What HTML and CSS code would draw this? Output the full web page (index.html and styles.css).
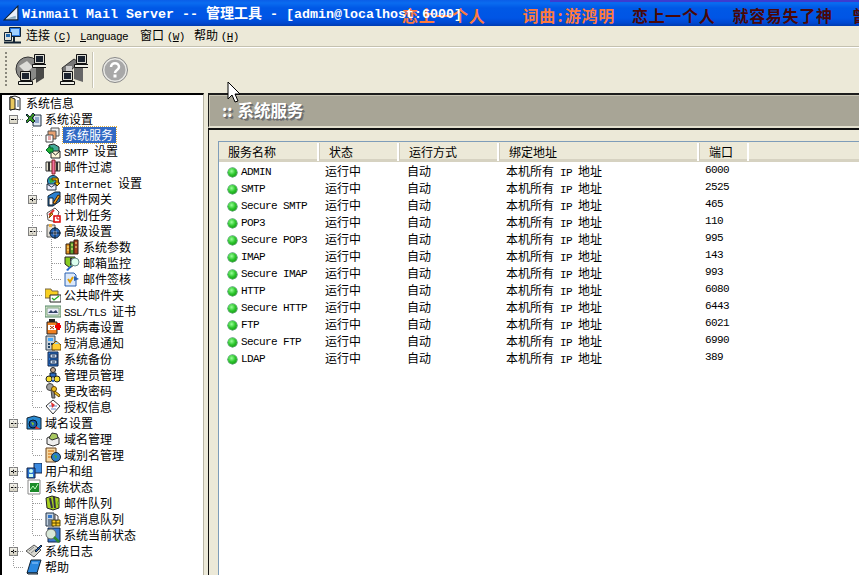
FILE: index.html
```html
<!DOCTYPE html>
<html lang="zh">
<head>
<meta charset="utf-8">
<title>Winmail Mail Server</title>
<link rel="stylesheet" href="styles.css">
</head>
<body>
<svg class="defs" width="0" height="0">
<defs>
<symbol id="i-info" viewBox="0 0 16 16"><path d="M3 2l5-1 5 2v12l-5-1-5 1z" fill="#fff" stroke="#222"/><path d="M3 2l5 2v10l-5 1z" fill="#e8c860" stroke="#222"/><path d="M10 5h2v7h-2z" fill="#9ab"/></symbol>
<symbol id="i-set" viewBox="0 0 16 16"><path d="M7 4h8v11H7z" fill="#dfe8f0" stroke="#234"/><path d="M9 7h4M9 9h4M9 11h4" stroke="#46a"/><path d="M1 3l3 3 3-4 2 2-3 3 3 3-2 2-3-3-3 3-1-2 3-3-3-3z" fill="#3a9a20" stroke="#123"/></symbol>
<symbol id="i-svc" viewBox="0 0 16 16"><path d="M6 1h8v8H6z" fill="#eee" stroke="#555"/><path d="M3 4h8v8H3z" fill="#e8a070" stroke="#555"/><path d="M1 8h7v7H1z" fill="#fff" stroke="#444"/><path d="M3 10h3M3 12h3" stroke="#c55"/></symbol>
<symbol id="i-smtp" viewBox="0 0 16 16"><path d="M4 2l5-1 5 3v5H4z" fill="#4a9" stroke="#222"/><path d="M6 8h9v7H6z" fill="#fff8d8" stroke="#222"/><path d="M6 8l4.500 4 4.500-4" fill="none" stroke="#222"/><path d="M1 7l4-4v2h3v4H5v2z" fill="#20b030" stroke="#063"/></symbol>
<symbol id="i-filter" viewBox="0 0 16 16"><path d="M1 3h14v9H1z" fill="#e8e4d0" stroke="#333"/><path d="M4 3v9M12 3v9" stroke="#333" stroke-width="2"/><path d="M7 1h3v14H7z" fill="#f070a0" stroke="#822"/></symbol>
<symbol id="i-net" viewBox="0 0 16 16"><circle cx="8" cy="6" r="5.500" fill="#2a9ad0" stroke="#123"/><path d="M4 3l4 1 1 3-4 1z" fill="#3a3"/><path d="M7 3l6 0 0 5 2 0-3 3-3-3 2 0 0-3-4 0z" fill="#fc0" stroke="#530"/><path d="M2 9h9v6H2z" fill="#eef" stroke="#234"/><path d="M2 9l4.500 3 4.500-3" fill="none" stroke="#234"/></symbol>
<symbol id="i-gate" viewBox="0 0 16 16"><path d="M3 5l7-4h5v9l-7 5H3z" fill="#2a80d0" stroke="#123"/><path d="M4 7h4v7H4z" fill="#fff" stroke="#123"/><path d="M8 12l5-8 2 1-5 8z" fill="#f0a020" stroke="#420"/></symbol>
<symbol id="i-task" viewBox="0 0 16 16"><path d="M2 6l8-5 4 4-3 10-8-2z" fill="#fff" stroke="#555"/><path d="M4 8l5-5" stroke="#d33" stroke-width="2"/><path d="M4 11l2-5 2 1z" fill="#fc3" stroke="#840"/><rect x="9" y="9" width="6" height="6" fill="#fff" stroke="#d00" stroke-width="1.500"/><path d="M12 10v2h2" stroke="#d00" fill="none"/></symbol>
<symbol id="i-adv" viewBox="0 0 16 16"><path d="M2 2h8v12H2z" fill="#e4e0d8" stroke="#555"/><path d="M4 1h3v3H4z" fill="#f0b040"/><circle cx="10" cy="10" r="5" fill="#2a68b8" stroke="#123"/><circle cx="10" cy="10" r="2" fill="#dde"/><path d="M10 4v12M4 10h12" stroke="#123"/></symbol>
<symbol id="i-par" viewBox="0 0 16 16"><path d="M2 5h4v10H2z" fill="#e09020" stroke="#321"/><path d="M6 3h4v12H6z" fill="#58a030" stroke="#321"/><path d="M10 1h4v14h-4z" fill="#a84020" stroke="#321"/><path d="M3 8h2M7 6h2M11 4h2M3 11h2M7 10h2M11 8h2" stroke="#fe8"/></symbol>
<symbol id="i-mon" viewBox="0 0 16 16"><path d="M1 2h10v7l-5 4-5-4z" fill="#8c2" stroke="#222"/><path d="M6 3h3l3 2v5H6z" fill="#333"/><circle cx="11" cy="7" r="4" fill="#dfe" stroke="#688"/><path d="M2 15l5-5 1 1-4 5z" fill="#26c"/></symbol>
<symbol id="i-sign" viewBox="0 0 16 16"><path d="M1 2h9l2 2v11H1z" fill="#dbe8fa" stroke="#2a60b0"/><path d="M4 8l2 3 3-5" fill="none" stroke="#e0a000" stroke-width="2"/><path d="M10 5l5 3-5 2z" fill="#2a60b0"/></symbol>
<symbol id="i-pub" viewBox="0 0 16 16"><path d="M0 2h6l1 2h6v7H0z" fill="#f8d020" stroke="#764"/><path d="M5 8h11v7H5z" fill="#fff" stroke="#222"/><path d="M7 11l2 2 5-4" fill="none" stroke="#2a2" stroke-width="1.300"/></symbol>
<symbol id="i-ssl" viewBox="0 0 16 16"><path d="M0 3h16v11H0z" fill="#cfe0c8" stroke="#586"/><path d="M2 5h12v7H2z" fill="#eef" stroke="#8a8"/><path d="M3 10l3-3 2 2 3-2 2 3z" fill="#346"/></symbol>
<symbol id="i-av" viewBox="0 0 16 16"><path d="M4 0h6v3H4z" fill="#222"/><path d="M2 3h10v12H2z" fill="#f08020" stroke="#222"/><path d="M3 6h8v5H3z" fill="#fff"/><path d="M5 7l4 3M9 7l-4 3" stroke="#a30"/><path d="M10 6h2V4h3v2h1v3h-1v2h-3V9h-2z" fill="#e00"/></symbol>
<symbol id="i-sms" viewBox="0 0 16 16"><path d="M1 1h9v14H1z" fill="#c8d0d8" stroke="#345"/><path d="M3 3h5v3H3z" fill="#4af"/><path d="M3 8h2v2H3zM6 8h2v2H6zM3 11h2v2H3z" fill="#246"/><path d="M7 15V10l4-4 5 4v5z" fill="#fc3" stroke="#640"/><path d="M9 9l3-2 2 2z" fill="#8cf"/></symbol>
<symbol id="i-bak" viewBox="0 0 16 16"><path d="M3 1h10v14H3z" fill="#2a78d8" stroke="#124"/><path d="M5 3h7v4H5zM5 9h7v4H5z" fill="#cfe2f8" stroke="#124"/><path d="M7 5h3M7 11h3" stroke="#124"/></symbol>
<symbol id="i-adm" viewBox="0 0 16 16"><circle cx="8" cy="3" r="2.500" fill="#c8a890" stroke="#222"/><path d="M5 6h6v4H5z" fill="#2a68c0" stroke="#123"/><circle cx="4" cy="12" r="3" fill="#f8e030" stroke="#222"/><circle cx="12" cy="12" r="3" fill="#f8e030" stroke="#222"/><path d="M7 13h2v2H7z" fill="#2a68c0"/></symbol>
<symbol id="i-key" viewBox="0 0 16 16"><circle cx="5" cy="4" r="3.500" fill="#a0a0a0" stroke="#444"/><path d="M6 7l1 8h3l-1-8z" fill="#888" stroke="#444"/><circle cx="9" cy="6" r="2.500" fill="#f0c020" stroke="#640"/><path d="M10 8l5 4-1 2-5-4z" fill="#f0c020" stroke="#640"/></symbol>
<symbol id="i-lic" viewBox="0 0 16 16"><path d="M1 7l7-6 7 6-7 8z" fill="#fff" stroke="#333"/><path d="M4 7h8M6 10h5" stroke="#68c"/><path d="M6 3l4 3-3 3z" fill="#d33"/></symbol>
<symbol id="i-dom" viewBox="0 0 16 16"><path d="M1 3l7-2 7 2v11H1z" fill="#2a8ad0" stroke="#123"/><circle cx="7" cy="9" r="4" fill="#1a5aa8" stroke="#012"/><path d="M5 7l3 1-1 3z" fill="#8c2"/><path d="M10 11l4 3h-5z" fill="#d33"/></symbol>
<symbol id="i-dm" viewBox="0 0 16 16"><path d="M2 7l6-3 6 3v6l-6 2-6-2z" fill="#eee" stroke="#333"/><path d="M4 7l3-5 5 1 1 4-6 2z" fill="#a8c860" stroke="#333"/></symbol>
<symbol id="i-ali" viewBox="0 0 16 16"><path d="M1 1h10v14H1z" fill="#f8d8a0" stroke="#642"/><path d="M3 4h6M3 7h4M3 10h4" stroke="#c60"/><circle cx="11" cy="10" r="4.500" fill="#2a80c8" stroke="#123"/><path d="M9 8l3 1-1 3z" fill="#4a3"/></symbol>
<symbol id="i-usr" viewBox="0 0 16 16"><path d="M8 0h8v10H8z" fill="#3a8ae0" stroke="#124"/><path d="M1 5h8v10H1z" fill="#2a70d0" stroke="#124"/><circle cx="5" cy="8" r="2" fill="#cfe"/><path d="M3 11h4v3H3z" fill="#cfe"/></symbol>
<symbol id="i-sta" viewBox="0 0 16 16"><path d="M2 1h12v14H2z" fill="#fff" stroke="#888"/><path d="M4 4h9v9H4z" fill="#1a8a28"/><path d="M4 11l3-4 2 3 3-5" fill="none" stroke="#bfb"/></symbol>
<symbol id="i-que" viewBox="0 0 16 16"><path d="M1 3l6-2 7 2v10l-6 2-6-2z" fill="#a8d020" stroke="#222"/><path d="M5 3l2 10M9 2l1 11" stroke="#334" stroke-width="2"/><path d="M12 6l3 2-3 2z" fill="#7a3"/></symbol>
<symbol id="i-smq" viewBox="0 0 16 16"><path d="M1 2h8v13H1z" fill="#c0d0e0" stroke="#234"/><path d="M3 4h4v3H3z" fill="#37c"/><path d="M3 9h4M3 11h4M3 13h4" stroke="#234"/><path d="M7 9h8v6H7z" fill="#fc2" stroke="#540"/><path d="M11 9v6M7 12h8" stroke="#540"/><path d="M10 3l3 2v4h-3z" fill="#fff" stroke="#444"/></symbol>
<symbol id="i-cur" viewBox="0 0 16 16"><path d="M3 1h12v14H3z" fill="#3a7ad0" stroke="#124"/><circle cx="6" cy="7" r="5" fill="#d8e8d8" stroke="#666"/><path d="M9 10l5 5" stroke="#2a8a30" stroke-width="2.500"/></symbol>
<symbol id="i-log" viewBox="0 0 16 16"><path d="M0 8l8-6 7 5-7 7z" fill="#d8d8d0" stroke="#555"/><path d="M3 8l5-4M5 10l5-4" stroke="#888"/><path d="M9 8l6-6 1 1-6 6z" fill="#2a68c8" stroke="#123"/></symbol>
<symbol id="i-help" viewBox="0 0 16 16"><path d="M5 1h10l-4 13H1z" fill="#2a88e0" stroke="#123"/><path d="M1 14l10 0 1 1H2z" fill="#fff" stroke="#123"/><path d="M6 4l6 0" stroke="#9cf"/></symbol>
<symbol id="i-pc" viewBox="0 0 32 32"><path d="M20.500 .5h10v9h-10z" fill="#dcdcd4" stroke="#111"/><path d="M22 2h7v6h-7z" fill="#1c2430"/><path d="M18.500 10.500h14v3h-14z" fill="#f0f0e8" stroke="#111"/><path d="M6.500 17.500h10v9h-10z" fill="#dcdcd4" stroke="#111"/><path d="M8 19h7v6H8z" fill="#1c2430"/><path d="M4.500 27.500h14v3h-14z" fill="#f0f0e8" stroke="#111"/></symbol>
</defs>
</svg>

<div class="app">
  <header class="titlebar">
    <svg class="title-icon" viewBox="0 0 16 16" width="17" height="17"><path d="M1 14L14 1v13z" fill="#eaf0fa" stroke="#123"/><path d="M3 13l9-3v3z" fill="#8ab"/></svg>
    <div class="title-text"><span class="tl">Winmail Mail Server -- </span>管理工具<span class="tl"> - [admin@localhost:6000]</span></div>
  </header>
  <div class="lyrics">
    <span class="ly orange first">恋上一个人</span>
    <span class="ly orange">词曲<span class="colon">:</span>游鸿明</span>
    <span class="ly dark">恋上一个人</span>
    <span class="ly dark lastline">就容易失了神</span>
    <span class="ly dark">曾</span>
  </div>

  <nav class="menubar">
    <svg class="menu-icon" viewBox="0 0 17 17" width="17" height="17"><path d="M5.500 .5h11v9h-11z" fill="#2a78e0" stroke="#123"/><path d="M7 2h8v6H7z" fill="#9fd0ff"/><path d="M.5 5.500h7v8h-7z" fill="#e0e0d8" stroke="#123"/><path d="M2 7h4v3H2z" fill="#26a"/><path d="M0 15.500h17" stroke="#123" stroke-width="2"/><path d="M10 10v5" stroke="#123" stroke-width="2"/></svg>
    <span class="menu m1">连接 <span class="lat">(<u>C</u>)</span></span>
    <span class="menu m2"><span class="lat"><u>L</u>anguage</span></span>
    <span class="menu m3">窗口 <span class="lat">(<u>W</u>)</span></span>
    <span class="menu m4">帮助 <span class="lat">(<u>H</u>)</span></span>
  </nav>

  <div class="toolbar">
    <div class="grip"></div>
    <svg class="tb tb1" viewBox="0 0 32 32" width="32" height="32"><circle cx="14" cy="15" r="12" fill="#8a8a88" stroke="#333"/><path d="M5 12l8-5 6 6-7 6z" fill="#dcdcd8"/><path d="M22 11l8 3v10l-8 5z" fill="#4a4a48"/><use href="#i-pc"/></svg>
    <svg class="tb tb2" viewBox="0 0 32 32" width="32" height="32"><path d="M6 14l12-9 6 4-8 6-2 9-6-2z" fill="#777" stroke="#333"/><path d="M18 14h9v14l-9-3z" fill="#666"/><path d="M10 12h6v5h-6z" fill="#ccc"/><use href="#i-pc"/></svg>
    <div class="tb-sep"></div>
    <svg class="tb-help" viewBox="0 0 26 26" width="26" height="26"><circle cx="13" cy="13" r="11.500" fill="#a8a8a8" stroke="#e8e8e4" stroke-width="2"/><circle cx="13" cy="13" r="12.500" fill="none" stroke="#888"/><path d="M9 10c0-5 8-5 8 0 0 3-4 3-4 6" fill="none" stroke="#fff" stroke-width="2.500"/><rect x="11.500" y="17.500" width="3" height="3" fill="#fff"/></svg>
  </div>

  <main class="main">
    <aside class="tree">
      <div class="row"><svg class="ic"><use href="#i-info"/></svg><span class="tx">系统信息</span></div>
      <div class="row"><i class="c minus"></i><svg class="ic"><use href="#i-set"/></svg><span class="tx">系统设置</span></div>
      <div class="row"><i class="c v"></i><i class="c t"></i><svg class="ic"><use href="#i-svc"/></svg><span class="tx sel">系统服务</span></div>
      <div class="row"><i class="c v"></i><i class="c t"></i><svg class="ic"><use href="#i-smtp"/></svg><span class="tx"><span class="lat">SMTP </span>设置</span></div>
      <div class="row"><i class="c v"></i><i class="c t"></i><svg class="ic"><use href="#i-filter"/></svg><span class="tx">邮件过滤</span></div>
      <div class="row"><i class="c v"></i><i class="c t"></i><svg class="ic"><use href="#i-net"/></svg><span class="tx"><span class="lat">Internet </span>设置</span></div>
      <div class="row"><i class="c v"></i><i class="c plus t"></i><svg class="ic"><use href="#i-gate"/></svg><span class="tx">邮件网关</span></div>
      <div class="row"><i class="c v"></i><i class="c t"></i><svg class="ic"><use href="#i-task"/></svg><span class="tx">计划任务</span></div>
      <div class="row"><i class="c v"></i><i class="c minus t"></i><svg class="ic"><use href="#i-adv"/></svg><span class="tx">高级设置</span></div>
      <div class="row"><i class="c v"></i><i class="c v"></i><i class="c t"></i><svg class="ic"><use href="#i-par"/></svg><span class="tx">系统参数</span></div>
      <div class="row"><i class="c v"></i><i class="c v"></i><i class="c t"></i><svg class="ic"><use href="#i-mon"/></svg><span class="tx">邮箱监控</span></div>
      <div class="row"><i class="c v"></i><i class="c v"></i><i class="c l"></i><svg class="ic"><use href="#i-sign"/></svg><span class="tx">邮件签核</span></div>
      <div class="row"><i class="c v"></i><i class="c t"></i><svg class="ic"><use href="#i-pub"/></svg><span class="tx">公共邮件夹</span></div>
      <div class="row"><i class="c v"></i><i class="c t"></i><svg class="ic"><use href="#i-ssl"/></svg><span class="tx"><span class="lat">SSL/TLS </span>证书</span></div>
      <div class="row"><i class="c v"></i><i class="c t"></i><svg class="ic"><use href="#i-av"/></svg><span class="tx">防病毒设置</span></div>
      <div class="row"><i class="c v"></i><i class="c t"></i><svg class="ic"><use href="#i-sms"/></svg><span class="tx">短消息通知</span></div>
      <div class="row"><i class="c v"></i><i class="c t"></i><svg class="ic"><use href="#i-bak"/></svg><span class="tx">系统备份</span></div>
      <div class="row"><i class="c v"></i><i class="c t"></i><svg class="ic"><use href="#i-adm"/></svg><span class="tx">管理员管理</span></div>
      <div class="row"><i class="c v"></i><i class="c t"></i><svg class="ic"><use href="#i-key"/></svg><span class="tx">更改密码</span></div>
      <div class="row"><i class="c v"></i><i class="c l"></i><svg class="ic"><use href="#i-lic"/></svg><span class="tx">授权信息</span></div>
      <div class="row"><i class="c minus t"></i><svg class="ic"><use href="#i-dom"/></svg><span class="tx">域名设置</span></div>
      <div class="row"><i class="c v"></i><i class="c t"></i><svg class="ic"><use href="#i-dm"/></svg><span class="tx">域名管理</span></div>
      <div class="row"><i class="c v"></i><i class="c l"></i><svg class="ic"><use href="#i-ali"/></svg><span class="tx">域别名管理</span></div>
      <div class="row"><i class="c plus t"></i><svg class="ic"><use href="#i-usr"/></svg><span class="tx">用户和组</span></div>
      <div class="row"><i class="c minus t"></i><svg class="ic"><use href="#i-sta"/></svg><span class="tx">系统状态</span></div>
      <div class="row"><i class="c v"></i><i class="c t"></i><svg class="ic"><use href="#i-que"/></svg><span class="tx">邮件队列</span></div>
      <div class="row"><i class="c v"></i><i class="c t"></i><svg class="ic"><use href="#i-smq"/></svg><span class="tx">短消息队列</span></div>
      <div class="row"><i class="c v"></i><i class="c l"></i><svg class="ic"><use href="#i-cur"/></svg><span class="tx">系统当前状态</span></div>
      <div class="row"><i class="c plus t"></i><svg class="ic"><use href="#i-log"/></svg><span class="tx">系统日志</span></div>
      <div class="row"><i class="c l"></i><svg class="ic"><use href="#i-help"/></svg><span class="tx">帮助</span></div>
    </aside>

    <section class="content">
      <div class="banner"><span class="banner-text">:: 系统服务</span></div>
      <div class="pane">
        <div class="list">
          <div class="lrow head"><span class="h1">服务名称</span><span>状态</span><span>运行方式</span><span>绑定地址</span><span>端口</span><span></span></div>
          <div class="lrow"><span class="name"><b class="dot"></b><span class="lat">ADMIN</span></span><span>运行中</span><span>自动</span><span>本机所有<span class="lat"> IP </span>地址</span><span class="lat">6000</span><span></span></div>
          <div class="lrow"><span class="name"><b class="dot"></b><span class="lat">SMTP</span></span><span>运行中</span><span>自动</span><span>本机所有<span class="lat"> IP </span>地址</span><span class="lat">2525</span><span></span></div>
          <div class="lrow"><span class="name"><b class="dot"></b><span class="lat">Secure SMTP</span></span><span>运行中</span><span>自动</span><span>本机所有<span class="lat"> IP </span>地址</span><span class="lat">465</span><span></span></div>
          <div class="lrow"><span class="name"><b class="dot"></b><span class="lat">POP3</span></span><span>运行中</span><span>自动</span><span>本机所有<span class="lat"> IP </span>地址</span><span class="lat">110</span><span></span></div>
          <div class="lrow"><span class="name"><b class="dot"></b><span class="lat">Secure POP3</span></span><span>运行中</span><span>自动</span><span>本机所有<span class="lat"> IP </span>地址</span><span class="lat">995</span><span></span></div>
          <div class="lrow"><span class="name"><b class="dot"></b><span class="lat">IMAP</span></span><span>运行中</span><span>自动</span><span>本机所有<span class="lat"> IP </span>地址</span><span class="lat">143</span><span></span></div>
          <div class="lrow"><span class="name"><b class="dot"></b><span class="lat">Secure IMAP</span></span><span>运行中</span><span>自动</span><span>本机所有<span class="lat"> IP </span>地址</span><span class="lat">993</span><span></span></div>
          <div class="lrow"><span class="name"><b class="dot"></b><span class="lat">HTTP</span></span><span>运行中</span><span>自动</span><span>本机所有<span class="lat"> IP </span>地址</span><span class="lat">6080</span><span></span></div>
          <div class="lrow"><span class="name"><b class="dot"></b><span class="lat">Secure HTTP</span></span><span>运行中</span><span>自动</span><span>本机所有<span class="lat"> IP </span>地址</span><span class="lat">6443</span><span></span></div>
          <div class="lrow"><span class="name"><b class="dot"></b><span class="lat">FTP</span></span><span>运行中</span><span>自动</span><span>本机所有<span class="lat"> IP </span>地址</span><span class="lat">6021</span><span></span></div>
          <div class="lrow"><span class="name"><b class="dot"></b><span class="lat">Secure FTP</span></span><span>运行中</span><span>自动</span><span>本机所有<span class="lat"> IP </span>地址</span><span class="lat">6990</span><span></span></div>
          <div class="lrow"><span class="name"><b class="dot"></b><span class="lat">LDAP</span></span><span>运行中</span><span>自动</span><span>本机所有<span class="lat"> IP </span>地址</span><span class="lat">389</span><span></span></div>
        </div>
      </div>
    </section>
  </main>

  <svg class="cursor" viewBox="0 0 14 22" width="14" height="22"><path d="M1 1v17l4-4 3 7 3-1-3-7h5z" fill="#fff" stroke="#000"/></svg>
</div>
</body>
</html>
```

FILE: styles.css
```css
* { box-sizing: border-box; }
html, body { margin: 0; padding: 0; height: 100%; overflow: hidden; background: #ece9d8; }
body { font: 12px/16px "Noto Sans CJK SC", "Liberation Sans", sans-serif; color: #000; }
.defs { position: absolute; }
.lat { font-family: "Liberation Mono", monospace; font-size: 11px; letter-spacing: -.6px; }
.app { position: relative; width: 859px; height: 575px; overflow: hidden; display: flex; flex-direction: column; }

.titlebar { height: 26px; flex: none; display: flex; align-items: center; padding-left: 3px; gap: 2px;
  background: linear-gradient(#3c3cd0, #3c3cd0) no-repeat 550px 0 / 309px 2px,
    linear-gradient(#0a5ee8 0, #0a6cf0 3px, #0058e6 8px, #0055e5 18px, #0048d0 23px, #003cb0 26px); color: #fff; }
.title-icon { flex: none; }
.title-text { position: relative; z-index: 2; font-weight: 700; font-size: 14px; line-height: 26px; white-space: pre; }
.tl { font-family: "Liberation Mono", monospace; font-size: 13.33px; font-weight: 700; }
.lyrics { position: absolute; left: 402px; top: 4px; display: flex; gap: 17px; white-space: nowrap; z-index: 1; }
.ly { font-size: 16px; line-height: 22px; font-weight: 700; letter-spacing: .7px; }
.colon { margin: 0 1.500px; }
.first { margin-right: 20px; }
.lastline { margin-right: 2px; }
.orange { color: #ff7a3c; }
.dark { color: #4a0808; }

.menubar { height: 20px; flex: none; display: flex; align-items: center; padding: 0 0 1px 4px; white-space: pre; }
.menu-icon { flex: none; margin-right: 5px; }
.menu { width: 54px; }
.m2 { width: 60px; }

.toolbar { height: 47px; flex: none; display: flex; align-items: center; padding-left: 5px;
  border-top: 1px solid #c4c1b0; box-shadow: inset 0 1px 0 #fff; }
.grip { width: 2px; height: 36px; margin-right: 7px; background: repeating-linear-gradient(#8a887c 0 2px, transparent 2px 4px); }
.tb { flex: none; }
.tb1 { margin-right: 10px; }
.tb2 { margin-right: 4px; }
.tb-sep { width: 2px; height: 36px; border-left: 1px solid #c8c5b4; border-right: 1px solid #fff; margin-right: 8px; }
.tb-help { flex: none; }

.main { flex: 1; display: flex; gap: 4px; min-height: 0; }

.tree { width: 204px; flex: none; background: #fff; border-top: 2px solid #000; border-left: 2px solid #000; border-right: 1px solid #b8b5a4; padding-left: 2px; overflow: hidden; }
.row { height: 16px; display: flex; align-items: center; white-space: pre; }
.c { flex: none; display: block; width: 19px; height: 16px; position: relative; }
.c::before, .c::after { content: ""; position: absolute; }
.v::before, .t::before { left: 9px; top: 0; bottom: 0; width: 1px; background: repeating-linear-gradient(#999 0 1px, transparent 1px 2px); }
.t::after, .l::after { left: 10px; top: 8px; width: 9px; height: 1px; background: repeating-linear-gradient(90deg, #999 0 1px, transparent 1px 2px); }
.l::before { left: 9px; top: 0; height: 8px; width: 1px; background: repeating-linear-gradient(#999 0 1px, transparent 1px 2px); }
.minus::after, .plus::after { left: 10px; top: 8px; width: 9px; height: 1px; background: repeating-linear-gradient(90deg, #999 0 1px, transparent 1px 2px); }
.minus, .plus { background-repeat: no-repeat; }
.minus { background-image: linear-gradient(#000,#000), linear-gradient(#f4f3ec,#d8d4c4), linear-gradient(#808080,#808080); background-size: 5px 1px, 7px 7px, 9px 9px; background-position: 7px 8px, 6px 5px, 5px 4px; }
.plus { background-image: linear-gradient(#000,#000), linear-gradient(#000,#000), linear-gradient(#f4f3ec,#d8d4c4), linear-gradient(#808080,#808080); background-size: 5px 1px, 1px 5px, 7px 7px, 9px 9px; background-position: 7px 8px, 9px 6px, 6px 5px, 5px 4px; }
.ic { flex: none; width: 16px; height: 16px; margin: 0 3px 0 3px; }
.tx { display: inline-block; line-height: 16px; height: 16px; }
.sel { background: #316ac5; color: #fff; outline: 1px dotted #e0b040; padding: 0 3px 0 2px; margin-left: -1px; }

.content { flex: 1; min-width: 0; display: flex; flex-direction: column; }
.banner { height: 35px; flex: none; border-top: 2px solid #1c1c1c; border-left: 1px solid #1c1c1c; border-bottom: 2px solid #e4e1d0; background: #a8a596; padding-left: 13px; box-shadow: inset 0 1px 0 #c8c5b4, inset 1px 0 0 #c8c5b4; }
.banner-text { font-size: 16.5px; font-weight: 700; line-height: 31px; word-spacing: 1px; color: #fff; text-shadow: 1px 1px 0 #666, 2px 2px 0 #777; }
.pane { flex: 1; border-top: 2px solid #111; border-left: 1px solid #111; padding: 11px 0 0 9px; }
.list { background: #fff; border-top: 1px solid #7f9db9; border-left: 1px solid #7f9db9; height: 100%; margin-right: -2px; }
.lrow { display: grid; grid-template-columns: 100px 80px 100px 200px 50px 1fr; height: 17px; line-height: 17px; white-space: pre; }
.lrow > span:nth-child(2) { padding-left: 6px; }
.lrow > span:nth-child(3) { padding-left: 8px; }
.lrow > span:nth-child(4) { padding-left: 7px; }
.lrow > span:nth-child(5) { padding-left: 6px; }
.name { display: flex; align-items: center; padding-left: 9px; }
.dot { flex: none; width: 9px; height: 9px; border-radius: 50%; margin-right: 4px; background: radial-gradient(circle at 40% 35%, #9f9 0, #2ec82e 45%, #0a7a0a 100%); box-shadow: 0 0 0 .5px #063; }
.head { height: 20px; line-height: 18px; background: #ece9d8; border-bottom: 3px solid #d6d2c1; }
.head > span { padding-left: 10px !important; border-right: 2px solid #fff; box-shadow: 1px 0 0 #d0ccbc inset; margin: 1px 0; }
.head > span.h1 { padding-left: 9px !important; box-shadow: none; }
.head > span:last-child { border: 0; box-shadow: none; }

.cursor { position: absolute; left: 227px; top: 81px; z-index: 5; }
```
